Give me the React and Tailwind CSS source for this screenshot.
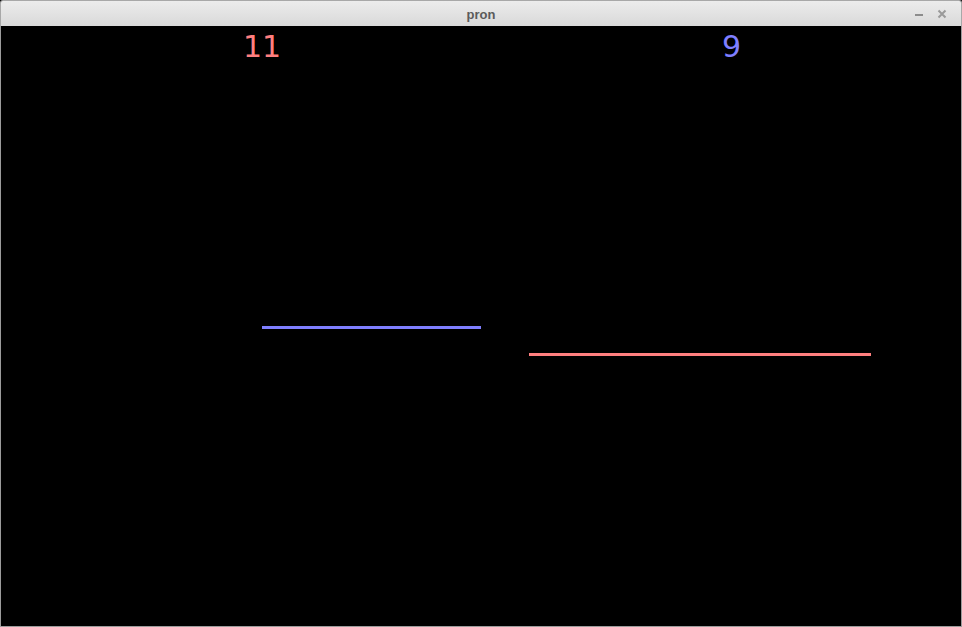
const App = () => {
  return (
    <div className="w-[962px] h-[627px] flex flex-col bg-black">
      {/* Window title bar */}
      <div className="h-[26px] shrink-0 relative flex items-center justify-center pt-[3px] bg-[linear-gradient(to_bottom,#ececec,#d9d9d9)] border border-b-0 border-[#a8a8a8] rounded-t-[3px]">
        <span className="text-[13px] font-bold text-[#5b5b5b] font-['Liberation_Sans',sans-serif]">
          pron
        </span>
        <div className="absolute right-[14px] top-0 h-full flex items-center gap-[14px] pt-[2px]">
          <span className="block w-[8px] h-[2px] bg-[#8c8c8c] mt-[1px]" />
          <svg width="10" height="10" viewBox="0 0 10 10" className="mt-[-1px]">
            <path d="M1.5 1.5 L8.5 8.5 M8.5 1.5 L1.5 8.5" stroke="#9a9a9a" strokeWidth="2" />
          </svg>
        </div>
      </div>

      {/* Game canvas */}
      <div className="flex-1 relative bg-black border-x border-b border-[#9c9c9c] overflow-hidden">
        {/* scores: drawn at 1/4 and 3/4 of the width */}
        <div className="grid grid-cols-4 pt-[6px] text-[30px] leading-[30px] font-['DejaVu_Sans',sans-serif]">
          <span className="col-start-2 pl-[2px] text-[#ff7f7f]">11</span>
          <span className="col-start-4 pl-[1px] text-[#7f7fff]">9</span>
        </div>

        {/* paddles */}
        <div className="absolute left-[261px] top-[300px] w-[219px] h-[3px] bg-[#7f7fff]" />
        <div className="absolute left-[528px] top-[327px] w-[342px] h-[3px] bg-[#ff7f7f]" />
      </div>
    </div>
  );
};

export default App;
